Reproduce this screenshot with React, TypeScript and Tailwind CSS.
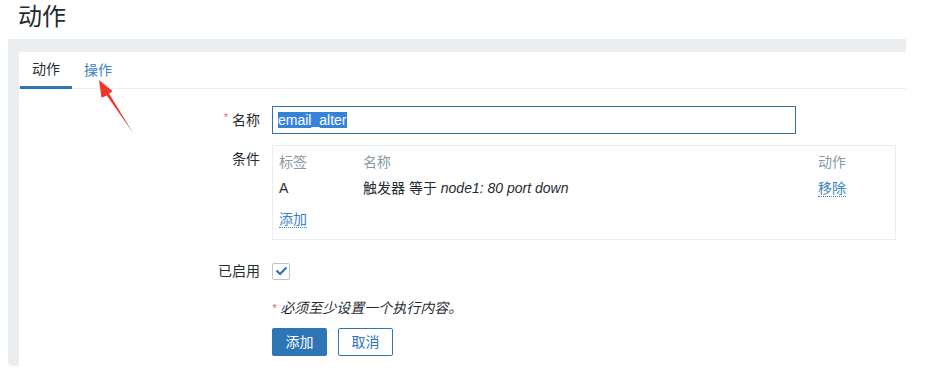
import React from "react";

export default function App() {
  return (
    <div className="relative w-[939px] h-[382px] bg-white overflow-hidden font-['Liberation_Sans','Noto_Sans_CJK_SC',sans-serif] text-[14px] text-[#1f2c33]">
      <div className="h-[39px] pl-[18px] pt-[1px] text-[24px] leading-[32px] text-[#1f2c33]">动作</div>
      <div className="ml-[8px] w-[898px] h-[327px] bg-[#ebeef0] rounded-bl-[4px] pl-[11px] pt-[13px]">
        <div className="bg-white h-full flex flex-col">
          <div className="h-[37px] flex border-b border-[#ebeef0]">
            <div className="ml-px px-3 h-[37px] -mb-px border-b-[3px] border-[#2e75b6] flex items-center text-[#1f2c33]">动作</div>
            <div className="px-3 h-[36px] flex items-center text-[#3b82c4]">操作</div>
          </div>

          <div className="flex items-center mt-[17px]">
            <div className="w-[241px] flex justify-end items-center">
              <span className="text-[#e45959] text-[10px] leading-[10px] mr-[4px] -mt-[4px]">*</span>
              <span>名称</span>
            </div>
            <div className="ml-[12px] w-[524px] h-[28px] border border-[#3270a8] flex items-center pl-[5px]">
              <span className="bg-[#3483d9] text-white leading-[16px] pr-[1px]">email_alter</span>
            </div>
          </div>

          <div className="flex items-start mt-[11px]">
            <div className="w-[241px] text-right pt-[5px] leading-[18px]">条件</div>
            <div className="ml-[12px] w-[624px] h-[95px] border border-[#ebeef0] pl-[6px] flex flex-col">
              <div className="flex h-[32px] items-center text-[#8a9aa5]">
                <div className="w-[84px]">标签</div>
                <div className="w-[455px]">名称</div>
                <div>动作</div>
              </div>
              <div className="flex h-[20px] items-center">
                <div className="w-[84px]">A</div>
                <div className="w-[455px]">
                  触发器 等于 <span className="italic">node1: 80 port down</span>
                </div>
                <div>
                  <span className="inline-block leading-[16px] mt-[2px] border-b border-dotted border-[#3b82c4] text-[#3b82c4]">移除</span>
                </div>
              </div>
              <div className="mt-[11px]">
                <span className="inline-block leading-[16px] border-b border-dotted border-[#3b82c4] text-[#3b82c4]">添加</span>
              </div>
            </div>
          </div>

          <div className="flex items-center mt-[22px]">
            <div className="w-[241px] text-right leading-[18px]">已启用</div>
            <div className="ml-[12px] w-[18px] h-[17px] border border-[#bcc6cc] rounded-[2px] flex items-center justify-center">
              <svg width="13" height="10" viewBox="0 0 13 10">
                <path d="M1.5 4.5 L5 8 L11.5 1.5" fill="none" stroke="#2e75b6" strokeWidth="2.2" />
              </svg>
            </div>
          </div>

          <div className="ml-[253px] mt-[19px] leading-[18px] italic">
            <span className="text-[#e45959] text-[11px] align-top">*</span> 必须至少设置一个执行内容。
          </div>

          <div className="ml-[253px] mt-[11px] flex gap-[11px]">
            <div className="w-[55px] h-[28px] bg-[#2e75b6] rounded-[2px] text-white flex items-center justify-center">添加</div>
            <div className="w-[55px] h-[28px] border border-[#2e75b6] rounded-[2px] text-[#2e75b6] bg-white flex items-center justify-center">取消</div>
          </div>
        </div>
      </div>

      <svg className="absolute left-0 top-0 pointer-events-none" width="939" height="382">
        <polygon points="99,80 112.5,91 109.2,93.8 133,133 106.8,95.6 101.5,97.8" fill="#f2352b" />
      </svg>
    </div>
  );
}
